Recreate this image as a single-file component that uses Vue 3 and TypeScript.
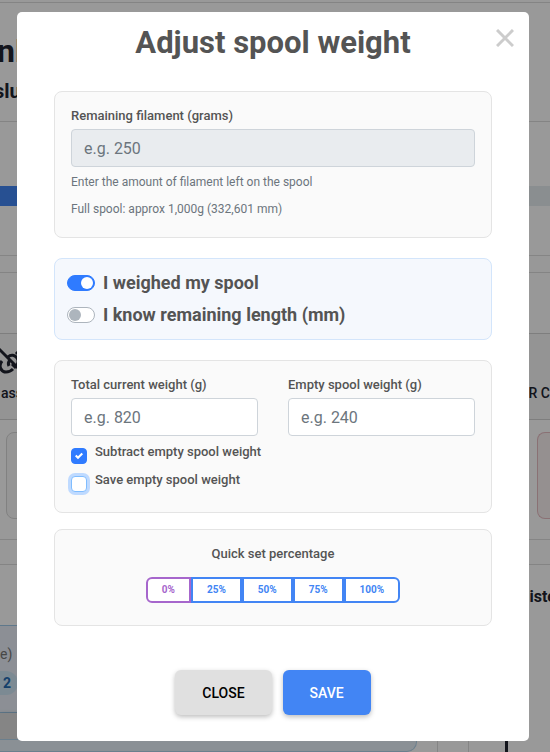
<script setup lang="ts">
import { ref } from 'vue'

const remaining = ref('')
const totalWeight = ref('')
const emptyWeight = ref('')
const weighed = ref(true)
const knowsLength = ref(false)
const subtractEmpty = ref(true)
const saveEmpty = ref(false)

const presets: number[] = [0, 25, 50, 75, 100]

function chooseMode(mode: 'weight' | 'length') {
  weighed.value = mode === 'weight'
  knowsLength.value = mode === 'length'
}
</script>

<template>
  <div class="page" aria-hidden="true">
    <div class="topbar"></div>
    <div class="page-head">
      <div class="page-title">nl</div>
      <div class="page-sub">slu</div>
    </div>
    <div class="usage">
      <div class="usage-track"><div class="usage-fill"></div></div>
    </div>
    <div class="gap"></div>
    <div class="strip"></div>
    <div class="actions">
      <div class="action">
        <svg class="unlink" viewBox="0 0 28 28" width="28" height="28">
          <path d="M-1 2L24 27" />
          <path d="M2 14C-2 19 1 25 6 25C9 25 11 24 13 22" />
          <path d="M8 10C11 7 15 8 17 11C19 14 18 17 16 19" />
          <path d="M10 13C8 15 8 17 9 19M12 17l4 4M16 7l3-3" />
        </svg>
        <span>ass</span>
      </div>
      <div class="action right"><span>QR C</span></div>
    </div>
    <div class="tiles">
      <div class="tile"></div>
      <div class="tile danger"></div>
    </div>
    <div class="gap tall"></div>
    <div class="lower">
      <div class="lower-left">
        <div class="lower-panel">
          <span class="note">e)</span>
          <span class="count">2</span>
        </div>
        <div class="lower-bar"></div>
        <div class="lower-foot"></div>
      </div>
      <div class="column"></div>
      <div class="column wide"></div>
      <div class="history"><span>iste</span><i></i></div>
    </div>
  </div>

  <div class="backdrop">
    <section class="modal" role="dialog" aria-modal="true" aria-labelledby="dialog-title">
      <button class="dismiss" type="button" aria-label="Close dialog">
        <svg viewBox="0 0 18 18" width="18" height="18"><path d="M1 1l16 16M17 1L1 17" /></svg>
      </button>
      <h2 id="dialog-title">Adjust spool weight</h2>

      <div class="card remaining">
        <label class="field-label" for="remaining">Remaining filament (grams)</label>
        <input id="remaining" v-model="remaining" class="field" type="text" placeholder="e.g. 250" disabled />
        <p>Enter the amount of filament left on the spool</p>
        <p>Full spool: approx 1,000g (332,601 mm)</p>
      </div>

      <div class="card modes">
        <label class="mode">
          <input type="checkbox" role="switch" :checked="weighed" @change="chooseMode('weight')" />
          <span>I weighed my spool</span>
        </label>
        <label class="mode">
          <input type="checkbox" role="switch" :checked="knowsLength" @change="chooseMode('length')" />
          <span>I know remaining length (mm)</span>
        </label>
      </div>

      <div class="card weights">
        <div class="columns">
          <div>
            <label class="field-label" for="total">Total current weight (g)</label>
            <input id="total" v-model="totalWeight" class="field" type="text" placeholder="e.g. 820" />
          </div>
          <div>
            <label class="field-label" for="empty">Empty spool weight (g)</label>
            <input id="empty" v-model="emptyWeight" class="field" type="text" placeholder="e.g. 240" />
          </div>
        </div>
        <label class="check">
          <span class="box">
            <input v-model="subtractEmpty" type="checkbox" />
            <svg v-if="subtractEmpty" viewBox="0 0 8 8" width="8" height="8">
              <path d="M6.564.75l-3.590 3.612-1.538-1.550L0 4.260l2.974 2.990L8 2.193z" />
            </svg>
          </span>
          <span>Subtract empty spool weight</span>
        </label>
        <label class="check">
          <span class="box">
            <input v-model="saveEmpty" class="focused" type="checkbox" />
            <svg v-if="saveEmpty" viewBox="0 0 8 8" width="8" height="8">
              <path d="M6.564.75l-3.590 3.612-1.538-1.550L0 4.260l2.974 2.990L8 2.193z" />
            </svg>
          </span>
          <span>Save empty spool weight</span>
        </label>
      </div>

      <div class="card quick">
        <div class="field-label">Quick set percentage</div>
        <div class="presets">
          <button v-for="p in presets" :key="p" type="button" :class="{ zero: p === 0 }">{{ p }}%</button>
        </div>
      </div>

      <footer>
        <button class="btn" type="button">Close</button>
        <button class="btn primary" type="button">Save</button>
      </footer>
    </section>
  </div>
</template>

<style>
body {
  margin: 0;
  background: #fff;
  font-family: Roboto, "Liberation Sans", sans-serif;
}
</style>

<style scoped>
* {
  box-sizing: border-box;
}

/* Page behind the dialog */
.page {
  height: 100vh;
  overflow: hidden;
  display: flex;
  flex-direction: column;
  color: #212330;
}
.page > * {
  flex-shrink: 0;
}
.topbar {
  height: 3px;
  border-bottom: 1px solid #dcdcdc;
}
.page-head {
  height: 119px;
  padding-top: 28px;
  border-bottom: 1px solid #dcdcdc;
  font-weight: 700;
}
.page-title {
  font-size: 32px;
  line-height: 40px;
  margin-left: -3px;
}
.page-sub {
  font-size: 20px;
  line-height: 40px;
  margin-left: -6px;
}
.usage {
  height: 134px;
  padding-top: 64px;
  border-bottom: 1px solid #dedede;
}
.usage-track {
  height: 20px;
  background: #e6edf1;
}
.usage-fill {
  height: 100%;
  width: 40%;
  background: #4285f4;
}
.gap {
  height: 17px;
  border-bottom: 1px solid #dcdcdc;
}
.gap.tall {
  height: 25px;
}
.gap,
.strip {
  background: #fdfdfd;
}
.strip {
  height: 61px;
  border-bottom: 1px solid #d2d2d2;
}
.actions {
  height: 86px;
  display: flex;
  justify-content: space-between;
  background: #f7f7f7;
  border-bottom: 1px solid #d2d2d2;
  font-size: 14px;
  font-weight: 500;
  line-height: 20px;
}
.action {
  display: flex;
  flex-direction: column;
  justify-content: flex-end;
  padding-bottom: 16px;
}
.action span {
  margin-left: 1px;
}
.unlink {
  margin-bottom: 8px;
  fill: none;
  stroke: #212330;
  stroke-width: 3;
}
.tiles {
  height: 120px;
  padding: 12px 0 20px 6px;
  display: flex;
  justify-content: space-between;
  border-bottom: 1px solid #dedede;
}
.tile {
  width: 80px;
  border: 1px solid #d8d8d8;
  border-radius: 8px;
  background: #f8f8f8;
}
.tile.danger {
  width: 13px;
  border-color: #e7bcc2;
  border-right: 0;
  border-radius: 8px 0 0 8px;
  background: #f9f1f1;
}
.lower {
  flex: 1 0 180px;
  display: flex;
}
.lower-left {
  flex: 1;
  display: flex;
  flex-direction: column;
  padding-top: 60px;
}
.lower-panel {
  height: 88px;
  padding-top: 16px;
  display: flex;
  flex-direction: column;
  align-items: flex-start;
  border: solid #9fc9e8;
  border-width: 1px 0;
  background: #e9eff8;
  color: #777;
}
.note {
  font-size: 14px;
  line-height: 24px;
}
.count {
  width: 18px;
  margin-top: 5px;
  padding-left: 3px;
  border-radius: 0 12px 12px 0;
  background: #cfe6f6;
  color: #246bb2;
  font-size: 14px;
  font-weight: 700;
  line-height: 24px;
}
.lower-bar {
  width: 75px;
  height: 26px;
  background: #dedede;
  box-shadow: 0 2px 5px #0006;
}
.lower-foot {
  height: 13px;
  border: solid #b3d4ec;
  border-width: 1px 1px 1px 0;
  border-radius: 0 0 10px 0;
  background: #e7f0f8;
}
.column {
  width: 21px;
  border-right: 1px solid #dedede;
}
.column.wide {
  width: 31px;
}
.history {
  width: 81px;
  display: flex;
  flex-direction: column;
  justify-content: space-between;
  align-items: flex-end;
  padding-top: 20px;
  font-size: 16px;
  font-weight: 700;
  line-height: 24px;
}
.history span {
  margin-right: -6px;
}
.history i {
  align-self: flex-start;
  width: 3px;
  height: 30px;
  margin-left: 36px;
  background: #212330;
}

/* Dialog */
.backdrop {
  position: fixed;
  inset: 0;
  overflow: auto;
  background: rgba(0, 0, 0, 0.4);
}
.modal {
  position: relative;
  margin: 12px 21px 11px 17px;
  padding: 10px 37px 26px;
  border-radius: 5px;
  background: #fff;
  color: #545454;
}
h2 {
  margin: 0 0 27px;
  font-size: 31px;
  line-height: 42px;
  font-weight: 700;
  text-align: center;
}
.dismiss {
  position: absolute;
  top: 16px;
  right: 14px;
  display: flex;
  padding: 1px;
  border: 0;
  background: none;
}
.dismiss path {
  fill: none;
  stroke: #ccc;
  stroke-width: 3;
}
.card {
  padding: 16px;
  border: 1px solid #e4e4e4;
  border-radius: 8px;
  background: #fafafa;
}
.field-label {
  display: block;
  margin-bottom: 5px;
  font-size: 13px;
  font-weight: 500;
  line-height: 16px;
}
.field {
  display: block;
  width: 100%;
  height: 38px;
  padding: 0 12px;
  border: 1px solid #ced4da;
  border-radius: 4px;
  background: #fff;
  font: 400 16px/24px Roboto, "Liberation Sans", sans-serif;
}
.field::placeholder {
  color: #6c757d;
}
.field:disabled {
  background: #e9ecef;
}
.remaining {
  margin-bottom: 20px;
}
.remaining p {
  margin: 6px 0 9px;
  color: #6c757d;
  font-size: 12px;
  line-height: 18px;
}
.remaining p:last-child {
  margin-bottom: 3px;
}
.modes {
  display: flex;
  flex-direction: column;
  gap: 8px;
  margin-bottom: 20px;
  padding: 12px;
  border-color: #d3e5fb;
  background: #f5f8fd;
}
.mode {
  display: flex;
  gap: 8px;
  font-size: 18px;
  font-weight: 700;
  line-height: 24px;
}
.mode input {
  flex-shrink: 0;
  display: flex;
  align-items: center;
  appearance: none;
  width: 28px;
  height: 16px;
  margin: 4px 0 0;
  padding: 0 1px;
  border: 1px solid #adb5bd;
  border-radius: 8px;
  background: #fff;
}
.mode input::before {
  content: "";
  width: 12px;
  height: 12px;
  border-radius: 50%;
  background: #adb5bd;
}
.mode input:checked {
  justify-content: flex-end;
  border-color: #2f7bff;
  background: #2f7bff;
}
.mode input:checked::before {
  background: #fff;
}
.weights {
  margin-bottom: 16px;
}
.columns {
  display: grid;
  grid-template-columns: 1fr 1fr;
  gap: 30px;
  margin-bottom: 6px;
}
.check {
  display: flex;
  gap: 8px;
  height: 28px;
  font-size: 13px;
  font-weight: 500;
  line-height: 20px;
}
.box {
  display: grid;
  place-items: center;
  width: 16px;
  height: 16px;
  margin-top: 6px;
}
.box > * {
  grid-area: 1 / 1;
}
.box svg {
  fill: #fff;
  pointer-events: none;
  z-index: 1;
}
.box input {
  appearance: none;
  width: 16px;
  height: 16px;
  margin: 0;
  border: 1px solid #adb5bd;
  border-radius: 4px;
  background: #fff;
}
.box input:checked {
  border-color: #2f7bff;
  background: #2f7bff;
}
.box .focused {
  border-color: #80bdff;
  box-shadow: 0 0 0 3px #bfdaff;
}
.weights {
  padding-bottom: 14px;
}
.quick {
  padding-bottom: 22px;
}
.quick .field-label {
  margin-bottom: 15px;
  text-align: center;
}
.presets {
  display: flex;
  justify-content: center;
}
.presets button {
  height: 26px;
  padding: 0 14px;
  border: 2px solid #4285f4;
  background: #fff;
  color: #4285f4;
  font: 700 10px/16px Roboto, "Liberation Sans", sans-serif;
}
.presets button:first-child {
  border-radius: 6px 0 0 6px;
}
.presets button:last-child {
  border-radius: 0 6px 6px 0;
}
.presets .zero {
  border-color: #a666cc;
  color: #a666cc;
}
footer {
  display: flex;
  justify-content: center;
  gap: 11px;
  margin-top: 44px;
}
.btn {
  height: 45px;
  padding: 0 27px;
  border: 0;
  border-radius: 6px;
  background: #e0e0e0;
  color: #000;
  font: 500 14px/20px Roboto, "Liberation Sans", sans-serif;
  text-transform: uppercase;
  box-shadow: 0 2px 5px rgba(0, 0, 0, 0.26);
}
.btn.primary {
  background: #4285f4;
  color: #fff;
}
</style>
